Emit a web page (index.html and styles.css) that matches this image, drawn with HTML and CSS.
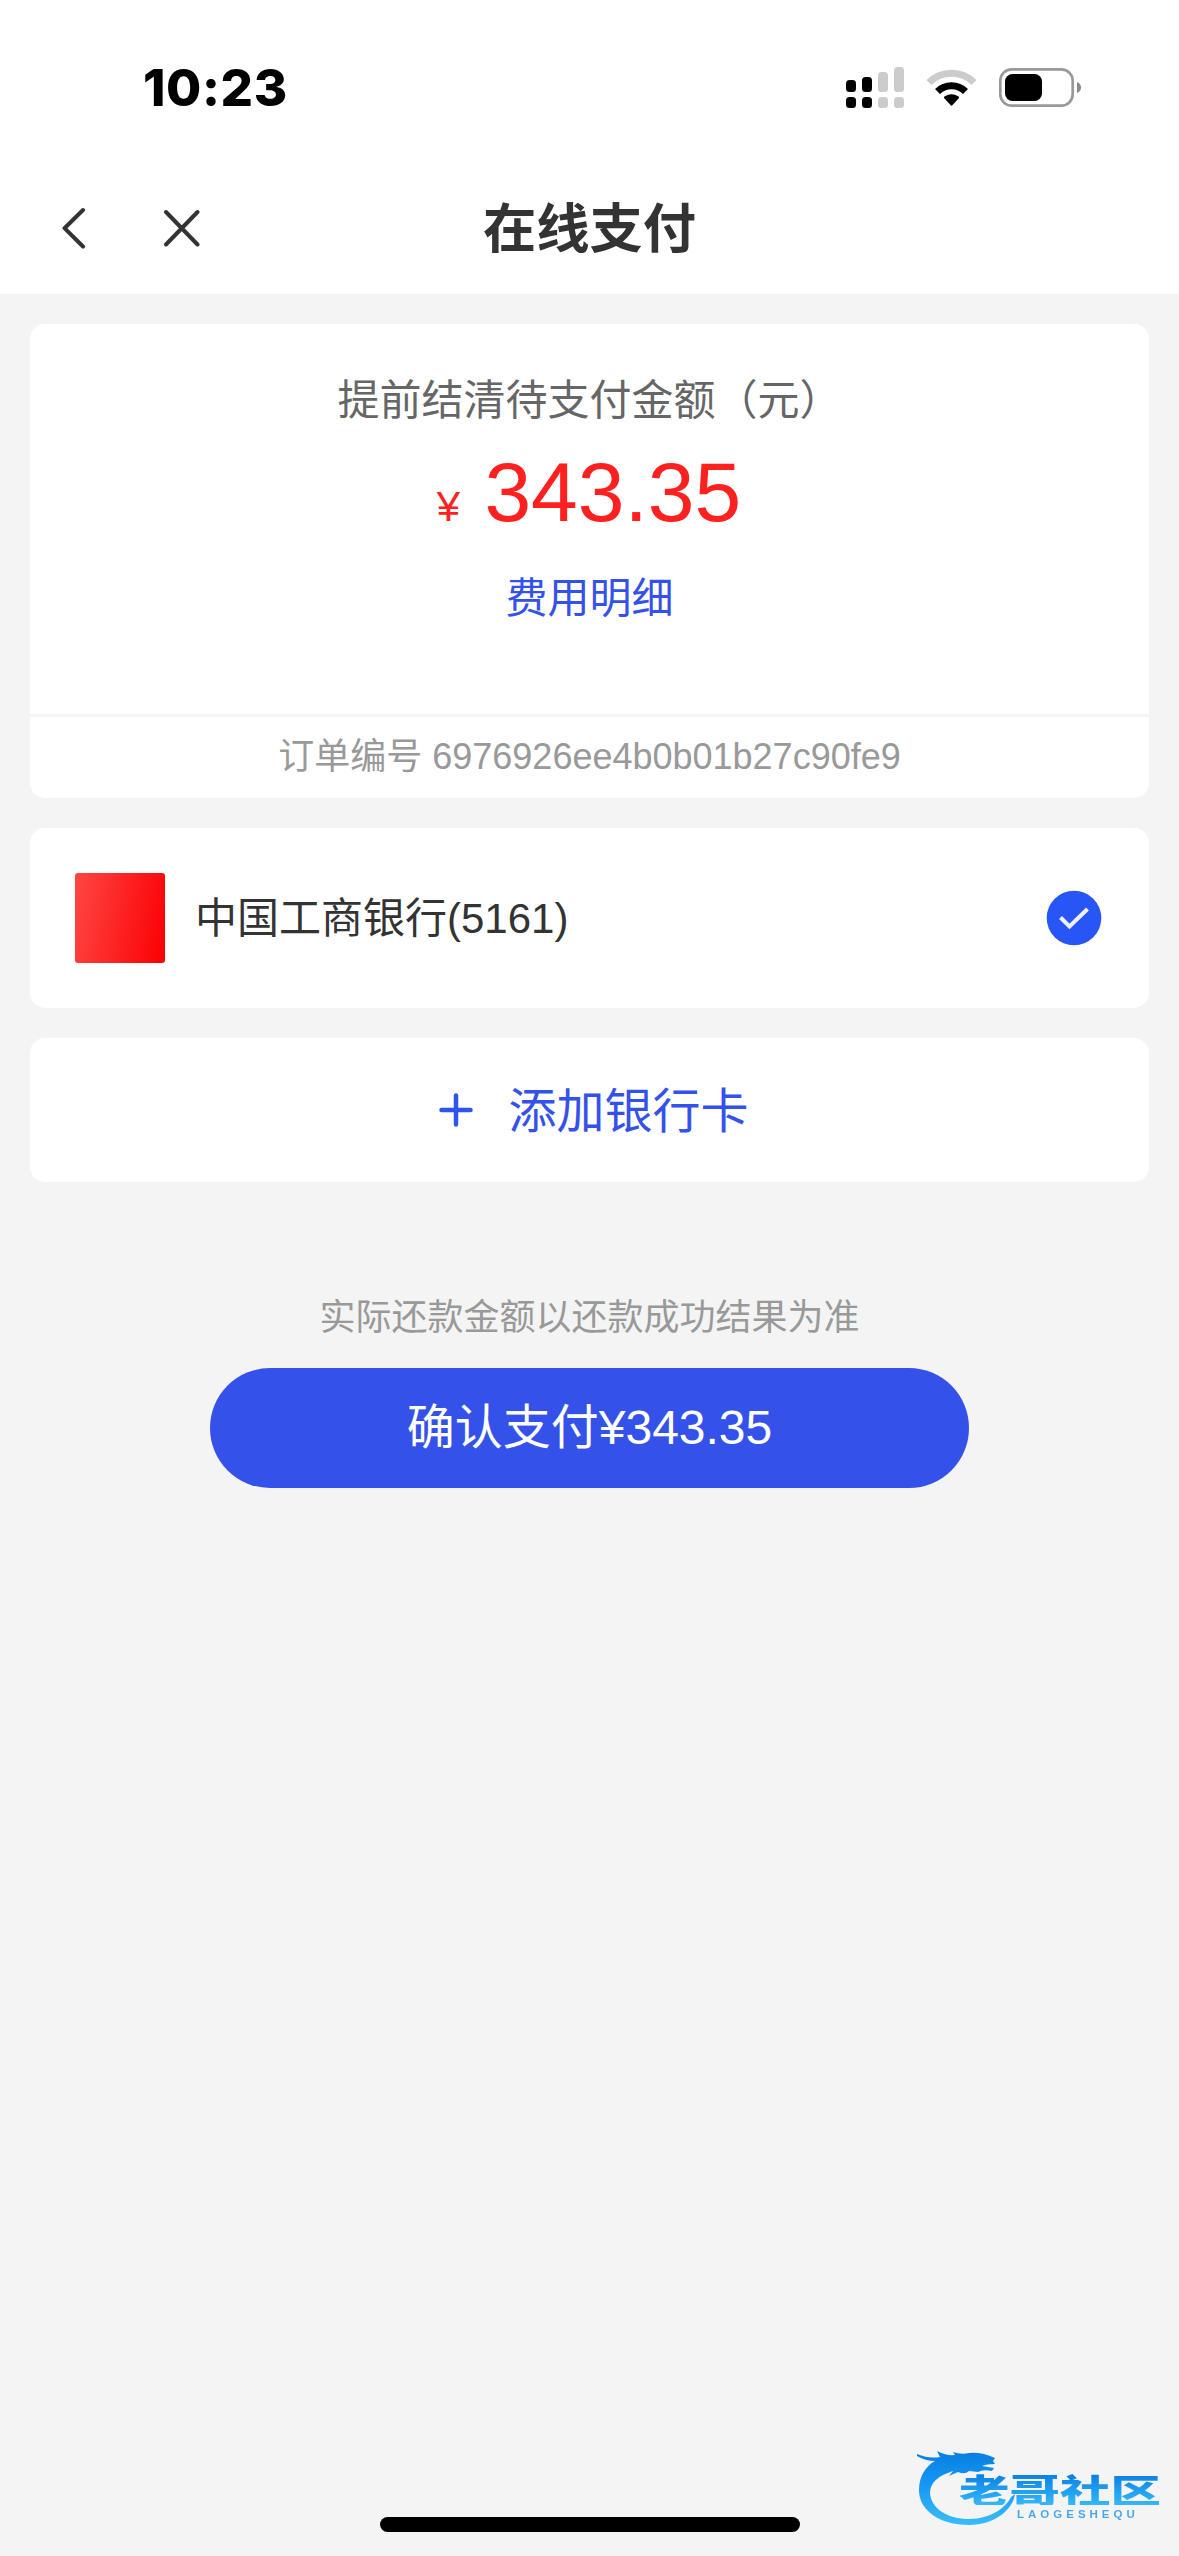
FILE: index.html
```html
<!DOCTYPE html>
<html lang="zh-CN">
<head>
<meta charset="utf-8">
<title>在线支付</title>
<link rel="stylesheet" href="styles.css">
</head>
<body>
<div class="screen">
  <header class="top">
    <div class="status">
      <span class="time">10:23</span>
      <svg class="status-icons" width="236" height="42" viewBox="846 66 236 42">
        <g fill="#000">
          <rect x="846" y="80" width="10" height="12" rx="3.5"/>
          <rect x="862" y="77" width="10" height="15" rx="3.5"/>
          <rect x="846" y="97" width="10" height="11" rx="3.5"/>
          <rect x="862" y="97" width="10" height="11" rx="3.5"/>
        </g>
        <g fill="#ccc">
          <rect x="878" y="72" width="10" height="20" rx="3.5"/>
          <rect x="894" y="67" width="10" height="25" rx="3.5"/>
          <rect x="878" y="97" width="10" height="11" rx="3.5"/>
          <rect x="894" y="97" width="10" height="11" rx="3.5"/>
        </g>
        <path d="M929 82.500A32 32 0 0 1 974 82.500" fill="none" stroke="#ccc" stroke-width="7"/>
        <path d="M937.500 91.500A20 20 0 0 1 965.500 91.500" fill="none" stroke="#000" stroke-width="7"/>
        <path d="M944 98Q943.500 97 944.500 96.500Q951.500 92 958.500 96.500Q959.500 97 959 98L952.300 105.300Q951.500 106 950.700 105.300Z"/>
        <rect x="1000.300" y="69.300" width="72.400" height="36.400" rx="11.500" fill="none" stroke="#999" stroke-width="2.700"/>
        <rect x="1005" y="74" width="37" height="27" rx="7.500"/>
        <path d="M1077 82Q1081 83.500 1081 87.500Q1081 91.500 1077 93Z" fill="#8a8a8a"/>
      </svg>
    </div>
    <nav class="nav">
      <div class="nav-side">
        <svg width="24" height="42" viewBox="0 0 24 42" class="nav-icon"><path d="M21 3L2.500 21.200L21 39.500"/></svg>
        <svg width="36" height="38" viewBox="0 0 36 38" class="nav-icon"><path d="M2 3L33.500 35.500M33.500 3L2 35.500"/></svg>
      </div>
      <h1 class="title">在线支付</h1>
      <div class="nav-side"></div>
    </nav>
  </header>

  <main class="content">
    <section class="card">
      <div class="summary">
        <p class="label">提前结清待支付金额（元）</p>
        <p class="amount"><span class="currency">¥</span> 343.35</p>
        <a class="detail">费用明细</a>
      </div>
      <p class="order">订单编号 6976926ee4b0b01b27c90fe9</p>
    </section>

    <section class="card bank">
      <span class="bank-logo"></span>
      <span class="bank-name">中国工商银行(5161)</span>
      <svg width="56" height="56" viewBox="0 0 56 56">
        <circle cx="28" cy="28" r="27.300" fill="#2855f6"/>
        <path d="M14.500 27.500L23.500 36.500L41.500 19" fill="none" stroke="#eef1fe" stroke-width="4"/>
      </svg>
    </section>

    <section class="card add">
      <svg width="34" height="34" viewBox="0 0 34 34"><path d="M2.500 17H31.500M17 2.500V31.500" stroke="#2f55f0" stroke-width="4.500" stroke-linecap="round"/></svg>
      <span class="add-text">添加银行卡</span>
    </section>

    <p class="hint">实际还款金额以还款成功结果为准</p>
    <button class="pay">确认支付¥343.35</button>
  </main>

  <div class="home-indicator"></div>

  <div class="watermark">
    <svg width="100" height="84" viewBox="0 0 100 84">
      <defs><linearGradient id="dragon" x1="0" y1="0" x2="0" y2="1"><stop offset="0" stop-color="#087ee0"/><stop offset=".45" stop-color="#1697f4"/><stop offset="1" stop-color="#38bdf9"/></linearGradient></defs>
      <path fill="url(#dragon)" d="M1 10Q13 15 24 13L21 7Q30 12 39 11L37 8Q45 11 53 9Q66 8 79 14L77 17L79 20Q70 20 66 22L78 24L76 27Q67 25 62 28L53 27Q49 31 42 28L33 32L37 27Q14 34 14 49C15 65 32 75 53 75C76 75 91 62 95 53L99 50C97 66 78 81 53 81C23 81 3 66 3 46C3 32 10 22 19 17Q9 17 1 12Z"/>
    </svg>
    <span class="wm-name">老哥社区</span>
    <span class="wm-latin">LAOGESHEQU</span>
  </div>
</div>
</body>
</html>
```
FILE: styles.css
```css
* {
  box-sizing: border-box;
  margin: 0;
  padding: 0;
}

body {
  background: #f4f4f4;
  color: #333;
  font-family: "Liberation Sans", "Noto Sans CJK SC", sans-serif;
}

.screen {
  position: relative;
  width: 1179px;
  height: 2556px;
  overflow: hidden;
}

.top {
  height: 294px;
  background: #fff;
}

.status {
  display: flex;
  justify-content: space-between;
  height: 160px;
  padding: 66px 97px 0 143px;
}

.time {
  height: 44px;
  color: #000;
  font: 800 51px/44px Inter, sans-serif;
  letter-spacing: .6px;
}

.nav {
  display: flex;
  align-items: center;
  height: 134px;
  padding: 1px 62px 0;
}

.nav-side {
  display: flex;
  flex: 1;
  align-items: center;
  gap: 78px;
}

.nav-icon {
  fill: none;
  stroke: #333;
  stroke-width: 4;
  stroke-linecap: round;
  stroke-linejoin: round;
}

.title {
  padding-top: 4px;
  font-size: 53.3px;
  font-weight: 700;
  line-height: 80px;
}

.content {
  display: flex;
  flex-direction: column;
  gap: 30px;
  padding: 30px;
}

.card {
  background: #fff;
  border-radius: 15px;
}

.summary {
  display: flex;
  flex-direction: column;
  align-items: center;
  height: 393px;
  padding-top: 47px;
  border-bottom: 3px solid #f4f4f4;
}

.label {
  color: #666;
  font-size: 42px;
  line-height: 60px;
}

.amount {
  margin: -2px 0 1px;
  color: #ff2020;
  font-size: 84px;
  line-height: 126px;
}

.currency {
  margin: 0 1px 0 -1px;
  font-size: 42px;
}

.detail {
  color: #3452ea;
  font-size: 42px;
  line-height: 56px;
}

.order {
  height: 81px;
  color: #999;
  font-size: 36px;
  line-height: 79px;
  text-align: center;
}

.bank {
  display: flex;
  align-items: center;
  height: 180px;
  padding: 0 47px 0 45px;
}

.bank-logo {
  width: 90px;
  height: 90px;
  border-radius: 3px;
  background: linear-gradient(100deg, #ff4646, #fb0000);
}

.bank-name {
  flex: 1;
  margin-left: 30px;
  padding-bottom: 7px;
  font-size: 42px;
}

.add {
  display: flex;
  align-items: center;
  justify-content: center;
  gap: 35px;
  height: 144px;
  padding-left: 9px;
  color: #3452ea;
  font-size: 48px;
}

.add-text {
  padding-bottom: 6px;
}

.hint {
  margin-top: 76px;
  color: #999;
  font-size: 36px;
  line-height: 60px;
  text-align: center;
}

.pay {
  align-self: center;
  width: 759px;
  height: 120px;
  margin-top: -10px;
  padding-bottom: 11px;
  border: 0;
  border-radius: 60px;
  background: #3452ea;
  color: #fff;
  font-family: inherit;
  font-size: 48px;
}

.home-indicator {
  position: absolute;
  left: 380px;
  bottom: 24px;
  width: 420px;
  height: 15px;
  border-radius: 8px;
  background: #000;
}

.watermark {
  position: absolute;
  left: 916px;
  top: 2444px;
  width: 250px;
  height: 84px;
}

.wm-name,
.wm-latin {
  position: absolute;
  background: linear-gradient(#087ee4, #35b9fa);
  background-clip: text;
  color: transparent;
  white-space: nowrap;
}

.wm-name {
  left: 43px;
  top: 29px;
  font: 900 50.5px/49px "Noto Sans CJK SC", sans-serif;
  transform: scaleY(.66);
  transform-origin: top;
}

.wm-latin {
  left: 101px;
  top: 64px;
  background: #45a6ec;
  background-clip: text;
  font: bold 11.5px/12px "Liberation Sans", sans-serif;
  letter-spacing: 4px;
}
```
